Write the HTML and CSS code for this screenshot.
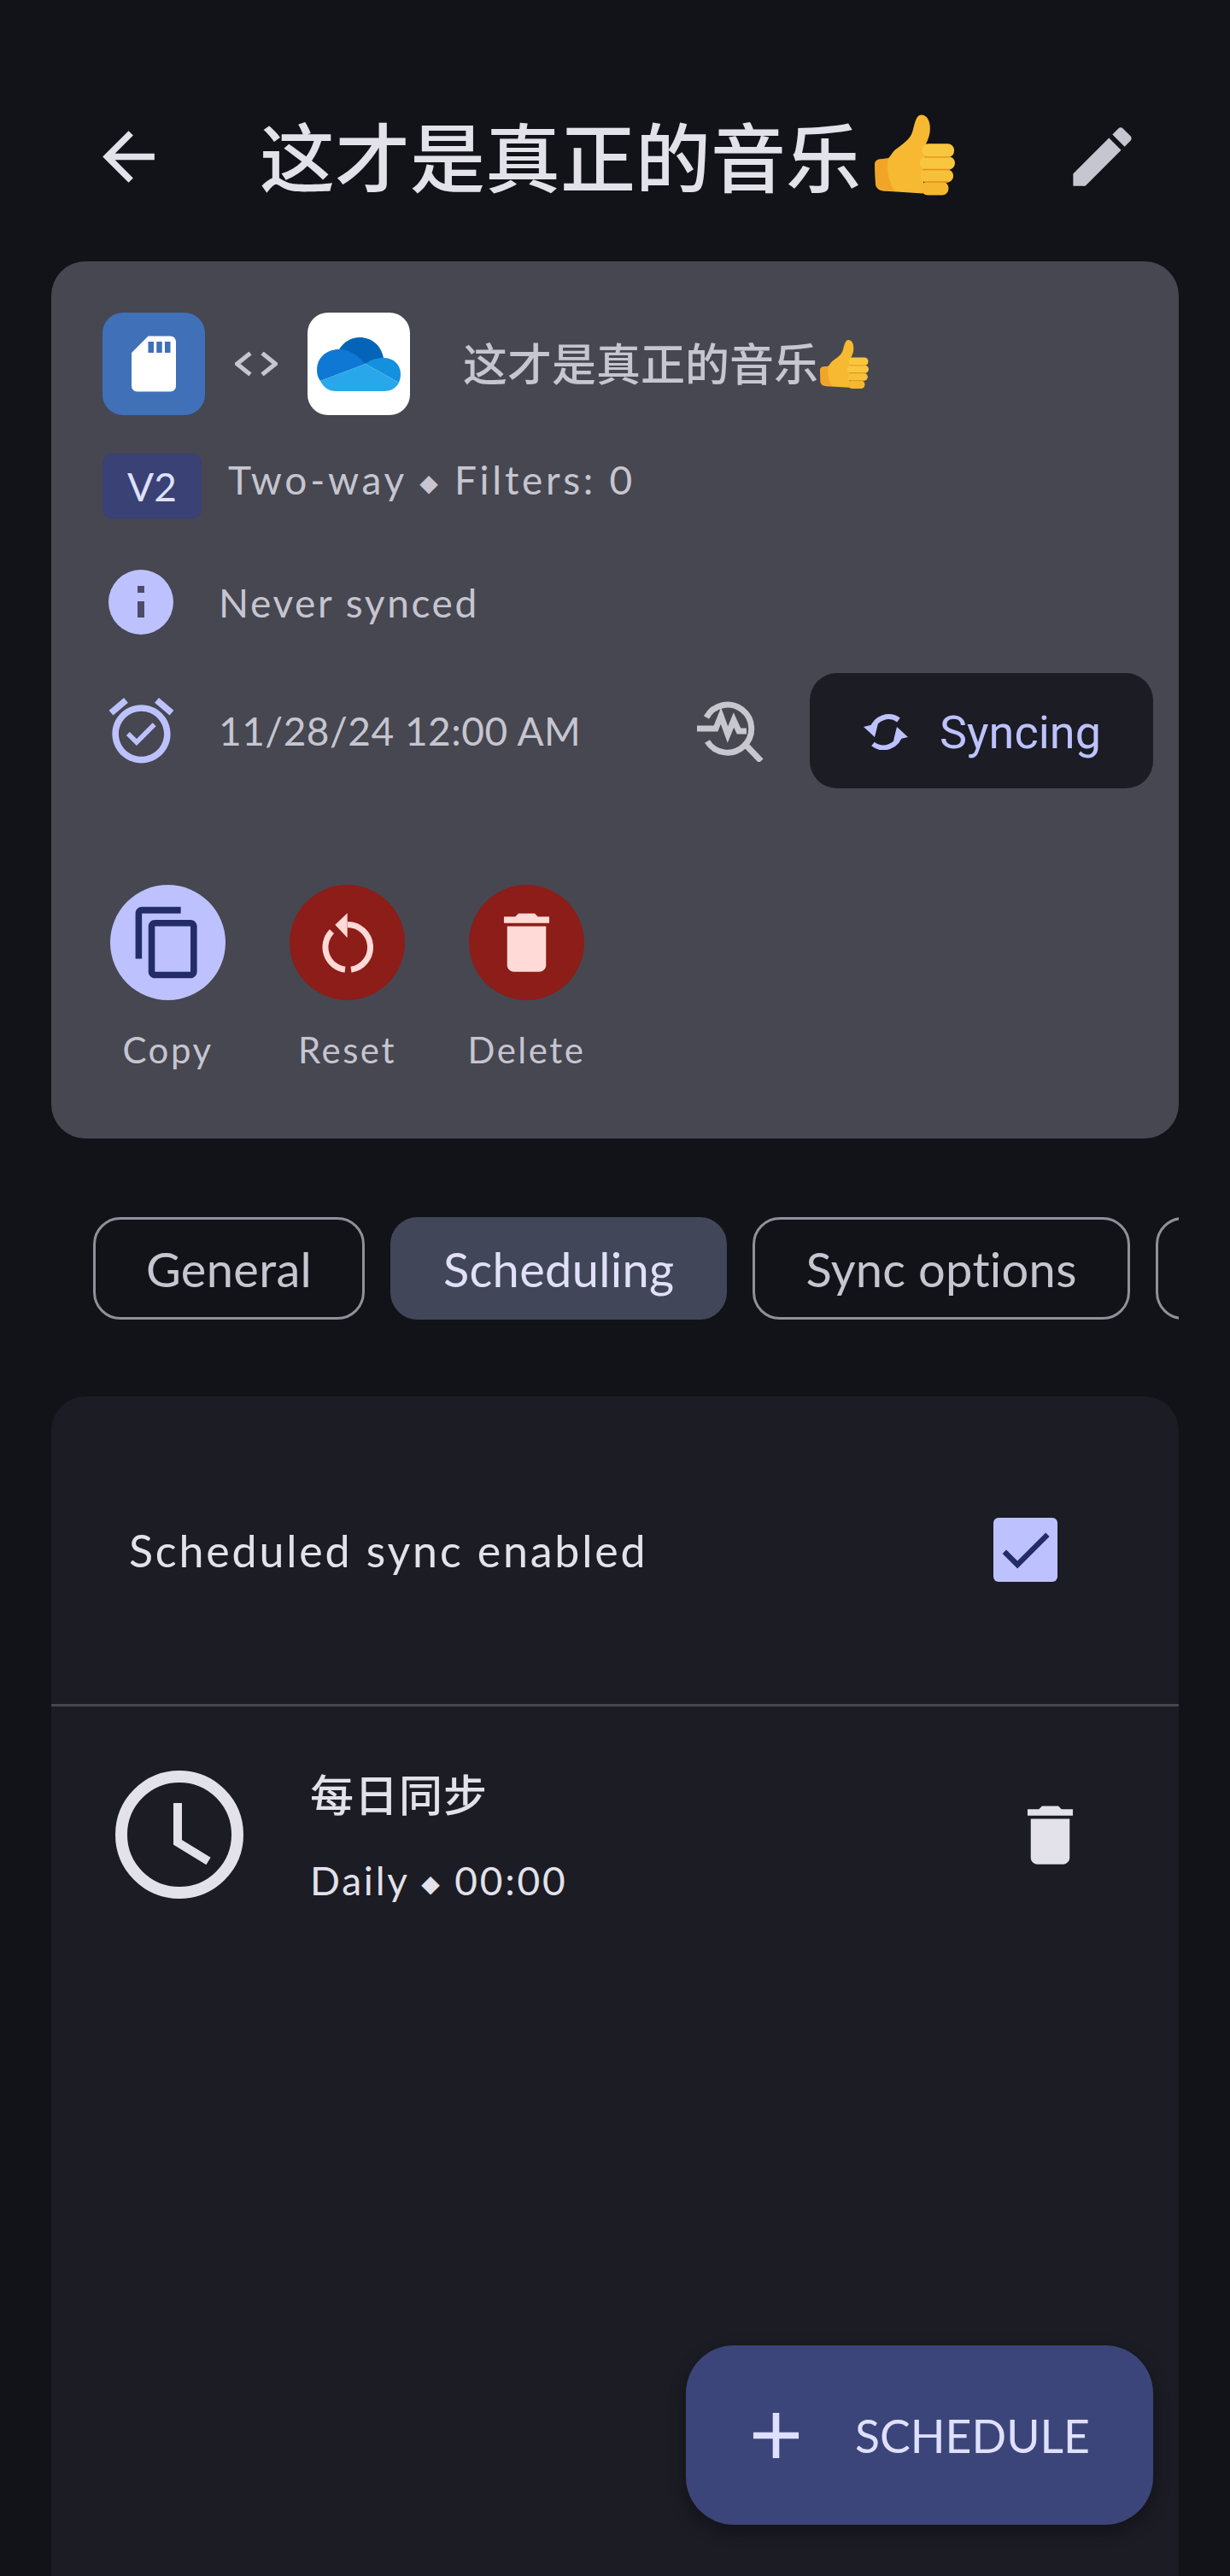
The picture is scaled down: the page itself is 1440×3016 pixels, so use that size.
FILE: index.html
```html
<!DOCTYPE html>
<html lang="zh-CN">
<head>
  <meta charset="UTF-8" />
  <meta name="viewport" content="width=device-width, initial-scale=1.0"/>
  <title>Task</title>
  <link rel="stylesheet" href="styles.css">
</head>
<body>
  <svg class="defs" width="0" height="0">
    <symbol id="thumb" viewBox="0 0 100 100">
      <path fill="#f7b932" d="M58 0c7 0 11 7 11 17 0 7-2 13-5 19l-4 62-45-3c-8 0-14-3-14-10L0 62c0-4 3-7 8-7l9-1c3-3 5-7 8-10 9-7 17-12 21-20 3-6 4-24 12-24z"/>
      <path fill="#ee9d22" d="M0 62c0-4 3-7 8-7l9-1c-2 10-1 28 8 41l-10-1C7 94 1 91 1 84z" opacity=".7"/>
      <rect x="59" y="36" width="40" height="17" rx="8" fill="#f9c73f"/>
      <rect x="56" y="52" width="44" height="16" rx="8" fill="#f9c640"/>
      <rect x="57" y="68" width="41" height="16" rx="8" fill="#f7c03a"/>
      <rect x="58" y="83" width="34" height="17" rx="8" fill="#f5b730"/>
      <path fill="none" stroke="#e0901a" stroke-width="1.500" d="M62 52.500h32M60 68h34M62 83.500h30"/>
    </symbol>
    <symbol id="trash" viewBox="0 0 24 24">
      <path d="M6 19c0 1.100.9 2 2 2h8c1.100 0 2-.9 2-2V7H6v12zM19 4h-3.500l-1-1h-5l-1 1H5v2h14V4z"/>
    </symbol>
  </svg>

  <header class="topbar">
    <svg class="icon-lg light" viewBox="0 0 24 24"><path d="M20 11H7.830l5.590-5.590L12 4l-8 8 8 8 1.410-1.410L7.830 13H20v-2z"/></svg>
    <h1 class="title">这才是真正的音乐<svg class="title-emoji"><use href="#thumb"/></svg></h1>
    <svg class="icon-lg muted push" viewBox="0 0 24 24"><path d="M3 17.250V21h3.750L17.810 9.940l-3.750-3.750L3 17.250zM20.710 7.040c.39-.39.39-1.020 0-1.410l-2.340-2.340c-.39-.39-1.020-.39-1.410 0l-1.830 1.830 3.750 3.750 1.830-1.830z"/></svg>
  </header>

  <section class="card">
    <div class="remotes">
      <div class="remote sd">
        <svg class="sd-icon" viewBox="0 0 24 24"><path d="M18 2h-8L4.020 8 4 20c0 1.100.9 2 2 2h12c1.100 0 2-.9 2-2V4c0-1.100-.9-2-2-2zm-6 6h-2V4h2v4zm3 0h-2V4h2v4zm3 0h-2V4h2v4z"/></svg>
      </div>
      <svg class="arrows" viewBox="0 0 50 28"><path d="M18 1.500 2.500 14 18 26.500M32 1.500 47.500 14 32 26.500"/></svg>
      <div class="remote drive">
        <svg class="drive-icon" viewBox="0 0 98 63">
          <path fill="#0364b8" d="M26 14C32 5 40 0 50 0c14 0 25 9 28 24L57 31 26 16z"/>
          <path fill="#0f78d4" d="M26 14c9 0 17 3 31 17L4 51C1 47 0 43 0 38c0-14 11-24 26-24z"/>
          <path fill="#1490df" d="M57 31c6-5 13-7 21-7 12 0 20 8 20 19 0 4-1 7-2 10z"/>
          <path fill="#28a8ea" d="M57 31l39 22c-3 6-9 10-17 10H22c-8 0-14-4-18-12z"/>
        </svg>
      </div>
      <span class="task-name">这才是真正的音乐<svg class="name-emoji"><use href="#thumb"/></svg></span>
    </div>

    <div class="mode-row">
      <span class="chip">V2</span>
      <span class="meta mode-text">Two-way <span class="dot">◆</span> Filters: 0</span>
    </div>

    <div class="info-row">
      <svg class="info-icon" viewBox="0 0 76 76">
        <circle cx="38" cy="38" r="38" fill="#bdc2ff"/>
        <rect x="34" y="19" width="8" height="8" fill="#4a4c6a"/>
        <rect x="34" y="37" width="8" height="19" fill="#4a4c6a"/>
      </svg>
      <span class="meta synced">Never synced</span>
    </div>

    <div class="next-row">
      <svg class="icon-lg accent" viewBox="0 0 24 24"><path d="M22 5.720l-4.600-3.860-1.290 1.530 4.600 3.860L22 5.720zM7.880 3.390L6.600 1.860 2 5.710l1.290 1.530 4.590-3.850zM12 4c-4.970 0-9 4.030-9 9s4.020 9 9 9c4.970 0 9-4.030 9-9s-4.030-9-9-9zm0 16c-3.870 0-7-3.130-7-7s3.130-7 7-7 7 3.130 7 7-3.130 7-7 7zm-1.460-5.470L8.410 12.400l-1.060 1.060 3.180 3.180 6-6-1.060-1.060-4.930 4.950z"/></svg>
      <span class="meta date">11/28/24 12:00 AM</span>
      <svg class="pulse" viewBox="0 0 78 72">
        <path d="M11 20A28 28 0 1 1 12 48M0 33h22l6-15 8 22 7-17 6 13h9M56 51 75 71"/>
      </svg>
      <button class="sync-btn">
        <svg class="sync-icon" viewBox="0 0 52 42">
          <path class="arc" d="M41 7A20 20 0 0 0 10 18M11 35A20 20 0 0 0 43 23"/>
          <path class="tip" d="M0 15 17 11 13 27zM52 27 35 31 39 15z"/>
        </svg>
        Syncing
      </button>
    </div>

    <div class="actions">
      <div class="action">
        <span class="round lilac">
          <svg class="icon-lg navy" viewBox="0 0 24 24"><path d="M16 1H4c-1.100 0-2 .9-2 2v14h2V3h12V1zm3 4H8c-1.100 0-2 .9-2 2v14c0 1.100.9 2 2 2h11c1.100 0 2-.9 2-2V7c0-1.100-.9-2-2-2zm0 16H8V7h11v14z"/></svg>
        </span>
        <span class="action-label">Copy</span>
      </div>
      <div class="action">
        <span class="round red">
          <svg class="reset-icon" viewBox="0 0 60 70">
            <path class="arc" d="M11.500 21.500A26.500 26.500 0 0 0 27 66.300M34 66.200A26.500 26.500 0 0 0 30 13.500"/>
            <path class="tip" d="M15.300 13.700 29.700 0V29z"/>
          </svg>
        </span>
        <span class="action-label">Reset</span>
      </div>
      <div class="action">
        <span class="round red">
          <svg class="icon-lg blush"><use href="#trash"/></svg>
        </span>
        <span class="action-label">Delete</span>
      </div>
    </div>
  </section>

  <nav class="tabs">
    <span class="tab">General</span>
    <span class="tab active">Scheduling</span>
    <span class="tab">Sync options</span>
    <span class="tab blank"></span>
  </nav>

  <section class="panel">
    <div class="setting">
      <span class="setting-label">Scheduled sync enabled</span>
      <span class="checkbox">
        <svg class="check" viewBox="0 0 24 24"><path d="M9 16.170L4.830 12l-1.420 1.410L9 19 21 7l-1.410-1.410z"/></svg>
      </span>
    </div>
    <div class="schedule">
      <svg class="clock" viewBox="0 0 150 150">
        <circle cx="75" cy="75" r="68"/>
        <path class="hands" d="M73 38v46l36 22"/>
      </svg>
      <div class="schedule-text">
        <div class="schedule-name">每日同步</div>
        <div class="schedule-meta">Daily <span class="dot">◆</span> 00:00</div>
      </div>
      <svg class="icon-lg light push"><use href="#trash"/></svg>
    </div>
    <button class="fab">
      <svg class="icon-lg pale" viewBox="0 0 24 24"><path d="M19 13h-6v6h-2v-6H5v-2h6V5h2v6h6v2z"/></svg>
      SCHEDULE
    </button>
  </section>
</body>
</html>
```

FILE: styles.css
```css
* {
  box-sizing: border-box;
}
html, body {
  height: 3016px;
  margin: 0;
  overflow: hidden;
}
body {
  display: flex;
  flex-direction: column;
  background: #121318;
  color: #e3e1e9;
  font-family: Lato, "Noto Sans CJK SC", sans-serif;
}
svg {
  flex: none;
}
.defs {
  position: absolute;
}
.icon-lg {
  width: 91px;
  height: 91px;
}
.light { fill: #e3e1e9; }
.muted { fill: #c6c5d0; }
.accent { fill: #bdc2ff; }
.navy { fill: #232c66; }
.blush { fill: #ffdad6; }
.pale { fill: #dfe0ff; }
.push {
  margin-left: auto;
}

.topbar {
  display: flex;
  align-items: center;
  height: 306px;
  padding: 61px 104px 0 105px;
}
.title {
  display: flex;
  align-items: center;
  margin: 0 0 0 108px;
  font-size: 88px;
  font-weight: 500;
  line-height: 1;
}
.title-emoji {
  width: 94px;
  height: 95px;
  margin-left: 16px;
  margin-top: -4px;
}

.card {
  flex: none;
  height: 1027px;
  margin: 0 60px;
  padding: 60px 30px 0 60px;
  background: #464750;
  border-radius: 40px;
  color: #c6c5d0;
}
.remotes {
  display: flex;
  align-items: center;
  height: 120px;
}
.remote {
  display: flex;
  align-items: center;
  justify-content: center;
  width: 120px;
  height: 120px;
  border-radius: 24px;
}
.sd {
  background: #4070b8;
}
.sd-icon {
  width: 78px;
  height: 78px;
  fill: #fff;
}
.drive {
  background: #fff;
}
.drive-icon {
  width: 98px;
  height: 63px;
}
.arrows {
  width: 50px;
  height: 28px;
  margin: 0 35px;
  fill: none;
  stroke: #c6c5d0;
  stroke-width: 5;
}
.task-name {
  display: flex;
  align-items: center;
  margin-left: 62px;
  font-size: 52px;
  font-weight: 500;
  line-height: 1;
}
.name-emoji {
  width: 57px;
  height: 57px;
  margin-left: 2px;
}
.mode-row {
  display: flex;
  align-items: center;
  gap: 31px;
  height: 76px;
  margin-top: 45px;
}
.chip {
  display: flex;
  align-items: center;
  justify-content: center;
  width: 116px;
  height: 76px;
  background: #394175;
  border-radius: 10px;
  color: #dfe0ff;
  font-size: 46px;
}
.meta {
  font-size: 46px;
}
.mode-text {
  margin-bottom: 16px;
  letter-spacing: 3.7px;
}
.dot {
  font-family: "DejaVu Sans", sans-serif;
  font-size: 28px;
  vertical-align: 4px;
}
.info-row {
  display: flex;
  align-items: center;
  gap: 53px;
  height: 92px;
  margin-top: 52px;
}
.info-icon {
  width: 76px;
  height: 76px;
  margin-left: 7px;
}
.synced {
  letter-spacing: 2.6px;
}
.next-row {
  display: flex;
  align-items: center;
  height: 135px;
  margin-top: 37px;
}
.date {
  margin-left: 45px;
  letter-spacing: 0.5px;
}
.pulse {
  width: 78px;
  height: 72px;
  margin-left: auto;
  fill: none;
  stroke: #c8c7d0;
  stroke-width: 7;
}
.sync-btn {
  display: flex;
  align-items: center;
  gap: 37px;
  width: 402px;
  height: 135px;
  margin-left: 54px;
  padding: 3px 0 0 63px;
  border: none;
  border-radius: 32px;
  background: #1b1c24;
  color: #bdc2ff;
  font-family: Roboto, sans-serif;
  font-size: 54px;
}
.sync-icon {
  width: 52px;
  height: 42px;
}
.arc {
  fill: none;
  stroke-width: 6;
}
.sync-icon .arc {
  stroke: #bdc2ff;
}
.sync-icon .tip {
  fill: #bdc2ff;
}
.actions {
  display: flex;
  gap: 75px;
  margin: 113px 0 0 9px;
}
.action {
  display: flex;
  flex-direction: column;
  align-items: center;
  width: 135px;
}
.round {
  display: flex;
  align-items: center;
  justify-content: center;
  width: 135px;
  height: 135px;
  border-radius: 50%;
}
.lilac { background: #bdc2ff; }
.red { background: #8c1d18; }
.reset-icon {
  width: 60px;
  height: 70px;
}
.reset-icon .arc {
  stroke: #ffdad6;
  stroke-width: 7;
}
.reset-icon .tip {
  fill: #ffdad6;
}
.action-label {
  margin-top: 33px;
  font-size: 42px;
  line-height: 50px;
  letter-spacing: 2.5px;
  white-space: nowrap;
}

.tabs {
  display: flex;
  flex: none;
  gap: 30px;
  height: 120px;
  margin: 92px 60px 0;
  padding-left: 49px;
  overflow: hidden;
}
.tab {
  display: flex;
  flex: none;
  align-items: center;
  padding: 0 59px;
  border: 3px solid #8f9099;
  border-radius: 32px;
  color: #c6c5d0;
  font-size: 56px;
  letter-spacing: 0.3px;
}
.tab.active {
  background: #424659;
  border-color: #424659;
  color: #e0e1f9;
}
.tab.blank {
  width: 120px;
}

.panel {
  position: relative;
  flex: 1;
  margin: 90px 60px 0;
  background: #1b1c24;
  border-radius: 40px 40px 0 0;
}
.setting {
  display: flex;
  align-items: center;
  justify-content: space-between;
  height: 363px;
  padding: 0 142px 1px 91px;
  border-bottom: 3px solid #46474f;
}
.setting-label {
  font-size: 52px;
  letter-spacing: 2.8px;
}
.checkbox {
  display: flex;
  width: 75px;
  height: 75px;
  background: #bdc2ff;
  border-radius: 6px;
}
.check {
  width: 75px;
  height: 75px;
  fill: #232c66;
}
.schedule {
  display: flex;
  align-items: flex-start;
  padding: 75px 105px 0 75px;
}
.clock {
  width: 150px;
  height: 150px;
  fill: none;
  stroke: #e3e1e9;
  stroke-width: 14;
}
.clock .hands {
  stroke-width: 10;
}
.schedule-text {
  margin-left: 78px;
}
.schedule-name {
  font-size: 51px;
  font-weight: 500;
  line-height: 60px;
  letter-spacing: 1px;
  margin-top: -1px;
}
.schedule-meta {
  margin-top: 42px;
  font-size: 46px;
  line-height: 56px;
  letter-spacing: 2.8px;
}
.schedule .icon-lg {
  margin-top: 30px;
}
.fab {
  position: absolute;
  right: 30px;
  bottom: 60px;
  display: flex;
  align-items: center;
  gap: 47px;
  width: 547px;
  height: 210px;
  padding: 0 0 0 60px;
  border: none;
  border-radius: 56px;
  background: #3c4579;
  box-shadow: 0 8px 20px rgba(0, 0, 0, 0.3);
  color: #dfe0ff;
  font-family: Lato, sans-serif;
  font-size: 53.5px;
}
```
